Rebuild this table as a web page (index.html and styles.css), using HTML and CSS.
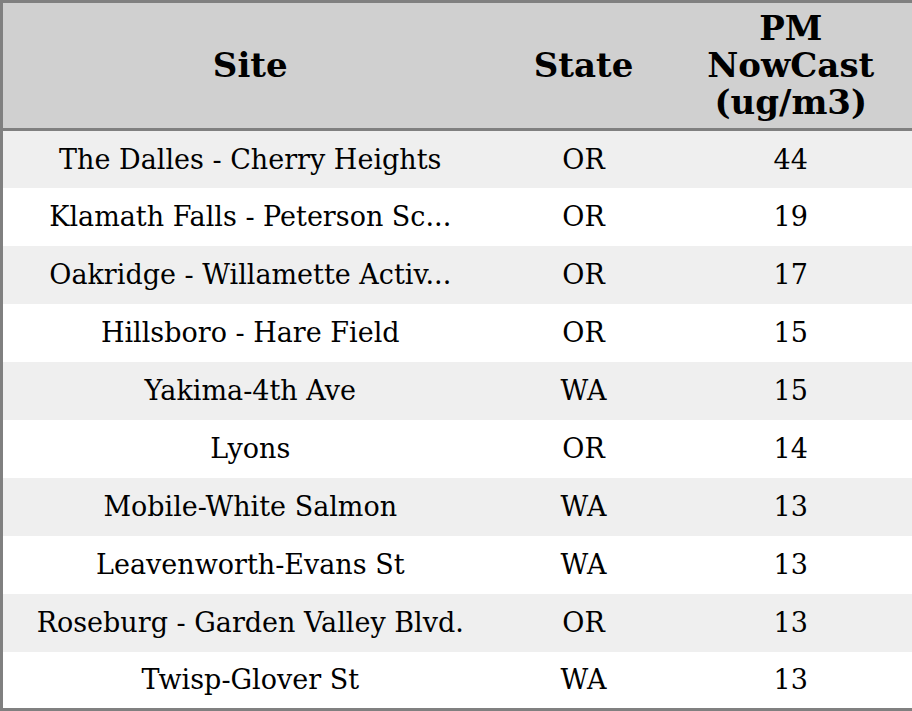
FILE: index.html
```html
<!DOCTYPE html>
<html>
<head>
<meta charset="utf-8">
<link rel="stylesheet" href="styles.css">
</head>
<body>
<table class="aq">
  <colgroup>
    <col class="c-site">
    <col class="c-state">
    <col class="c-pm">
  </colgroup>
  <thead>
    <tr class="head">
      <th>Site</th>
      <th>State</th>
      <th>PM<br>NowCast<br>(ug/m3)</th>
    </tr>
  </thead>
  <tbody>
    <tr><td>The Dalles - Cherry Heights</td><td>OR</td><td>44</td></tr>
    <tr><td>Klamath Falls - Peterson Sc...</td><td>OR</td><td>19</td></tr>
    <tr><td>Oakridge - Willamette Activ...</td><td>OR</td><td>17</td></tr>
    <tr><td>Hillsboro - Hare Field</td><td>OR</td><td>15</td></tr>
    <tr><td>Yakima-4th Ave</td><td>WA</td><td>15</td></tr>
    <tr><td>Lyons</td><td>OR</td><td>14</td></tr>
    <tr><td>Mobile-White Salmon</td><td>WA</td><td>13</td></tr>
    <tr><td>Leavenworth-Evans St</td><td>WA</td><td>13</td></tr>
    <tr><td>Roseburg - Garden Valley Blvd.</td><td>OR</td><td>13</td></tr>
    <tr><td>Twisp-Glover St</td><td>WA</td><td>13</td></tr>
  </tbody>
</table>
</body>
</html>
```
FILE: styles.css
```css
html, body {
  margin: 0;
  padding: 0;
  background: #ffffff;
}
.aq {
  width: 912px;
  height: 711px;
  border-collapse: collapse;
  table-layout: fixed;
  border: 3px solid #808080;
  font-family: "DejaVu Serif", serif;
  color: #000;
}
.c-site { width: 496px; }
.c-state { width: 172px; }
.c-pm { width: 244px; }
.head {
  background: #d0d0d0;
  height: 128px;
}
.head th {
  font-size: 34px;
  font-weight: bold;
  line-height: 37px;
  padding: 0;
  border-bottom: 3px solid #808080;
  text-align: center;
  vertical-align: middle;
}
tbody tr {
  height: 57.7px;
}
tbody tr:nth-child(odd) {
  background: #efefef;
}
tbody td {
  font-size: 27px;
  padding: 0;
  text-align: center;
  vertical-align: middle;
  white-space: nowrap;
}
```
